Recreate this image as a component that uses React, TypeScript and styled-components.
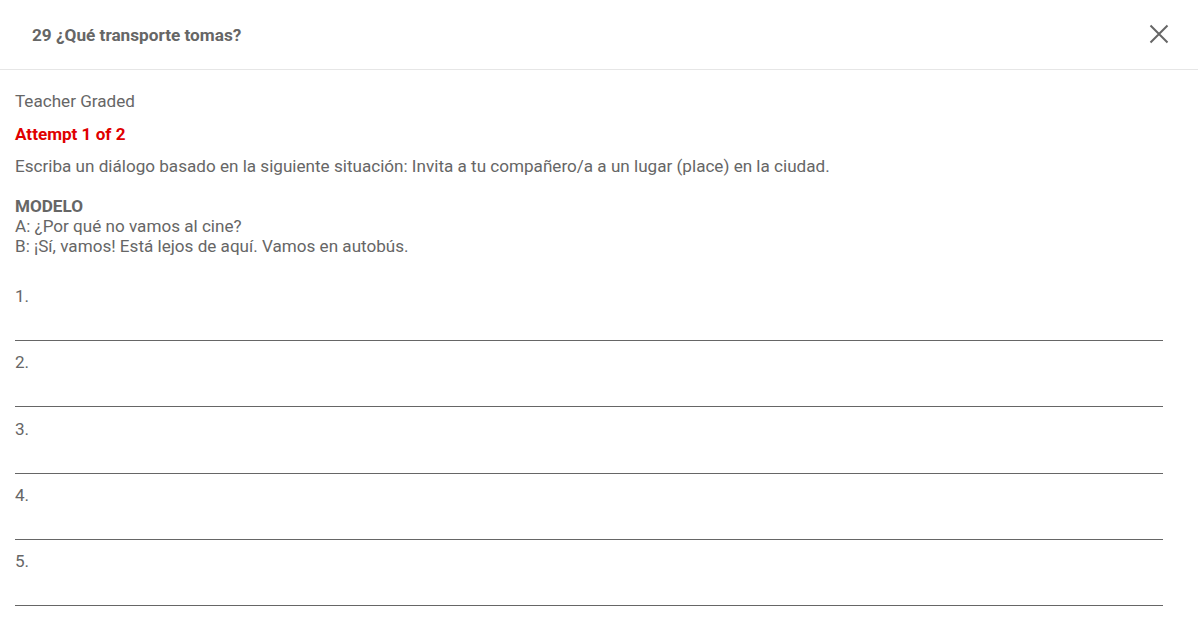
import React from "react";
import styled, { createGlobalStyle } from "styled-components";

const Global = createGlobalStyle`
  html, body { margin: 0; padding: 0; background: #fff; }
  body { font-family: Roboto, "Liberation Sans", Arial, sans-serif; color: #666; }
  * { box-sizing: border-box; }
`;

const Modal = styled.div`
  width: 1198px;
  min-height: 633px;
  background: #fff;
  display: flex;
  flex-direction: column;
`;

const Header = styled.header`
  height: 70px;
  border-bottom: 1px solid #e6e6e6;
  display: flex;
  align-items: center;
  justify-content: space-between;
  padding: 0 28px 0 32px;
`;

const Title = styled.h1`
  margin: 0;
  font-size: 17.2px;
  font-weight: 700;
  color: #666;
  line-height: 20px;
`;

const CloseButton = styled.button`
  width: 22px;
  height: 22px;
  border: 0;
  padding: 0;
  background: transparent;
  display: flex;
  align-items: center;
  justify-content: center;
  cursor: pointer;
  margin-top: -2px;
`;

const Body = styled.div`
  padding: 21px 35px 0 15px;
  display: flex;
  flex-direction: column;
`;

const Line = styled.p<{ $mt?: number; $bold?: boolean; $red?: boolean }>`
  margin: ${(p) => p.$mt ?? 0}px 0 0;
  font-size: 17.1px;
  line-height: 20px;
  font-weight: ${(p) => (p.$bold ? 700 : 400)};
  color: ${(p) => (p.$red ? "#e00000" : "#666")};
`;

const Model = styled.div`
  margin-top: 20px;
  font-size: 17.1px;
  line-height: 20px;
`;

const ModelTitle = styled.div`
  font-weight: 700;
`;

const Items = styled.div`
  margin-top: 30px;
  display: flex;
  flex-direction: column;
`;

const Item = styled.div`
  display: flex;
  flex-direction: column;
  margin-bottom: 11.25px;
`;

const Label = styled.label`
  font-size: 17.1px;
  line-height: 20px;
  color: #666;
`;

const Answer = styled.input`
  height: 35px;
  border: 0;
  border-bottom: 1px solid #666;
  outline: none;
  font-family: inherit;
  font-size: 17px;
  color: #666;
  background: transparent;
  padding: 0;
  width: 100%;
`;

export default function App() {
  return (
    <>
      <Global />
      <Modal>
        <Header>
          <Title>29 ¿Qué transporte tomas?</Title>
          <CloseButton aria-label="Close">
            <svg width="20" height="20" viewBox="0 0 20 20">
              <path d="M1.5 1.5 L18.5 18.5 M18.5 1.5 L1.5 18.5" stroke="#666" strokeWidth="2" fill="none" />
            </svg>
          </CloseButton>
        </Header>
        <Body>
          <Line>Teacher Graded</Line>
          <Line $mt={13} $bold $red>Attempt 1 of 2</Line>
          <Line $mt={12}>
            Escriba un diálogo basado en la siguiente situación: Invita a tu compañero/a a un lugar (place) en la ciudad.
          </Line>
          <Model>
            <ModelTitle>MODELO</ModelTitle>
            <div>A: ¿Por qué no vamos al cine?</div>
            <div>B: ¡Sí, vamos! Está lejos de aquí. Vamos en autobús.</div>
          </Model>
          <Items>
            {[1, 2, 3, 4, 5].map((n) => (
              <Item key={n}>
                <Label htmlFor={`a${n}`}>{n}.</Label>
                <Answer id={`a${n}`} type="text" />
              </Item>
            ))}
          </Items>
        </Body>
      </Modal>
    </>
  );
}
